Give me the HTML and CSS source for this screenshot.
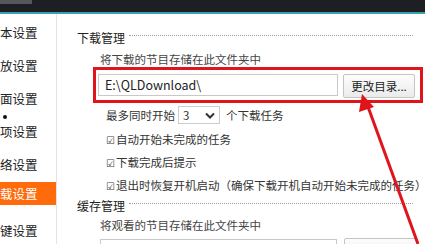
FILE: index.html
```html
<!DOCTYPE html>
<html lang="zh-CN">
<head>
    <meta charset="UTF-8">
    <title>下载设置</title>
    <link rel="stylesheet" href="styles.css">
</head>
<body>
    <div class="titlebar"><div class="tab"></div></div>
    <div class="window">
        <ul class="sidebar">
            <li>本设置</li>
            <li>放设置</li>
            <li>面设置</li>
            <li class="dot"></li>
            <li>项设置</li>
            <li>络设置</li>
            <li class="active">载设置</li>
            <li class="last">键设置</li>
        </ul>
        <div class="content">
            <div class="group-title"><span>下载管理</span><i></i></div>
            <div class="hint">将下载的节目存储在此文件夹中</div>
            <div class="marked">
                <div class="path">E:\QLDownload\</div>
                <button class="btn">更改目录...</button>
            </div>
            <div class="row tasks">
                <span>最多同时开始</span>
                <div class="select">3<svg width="10" height="7" viewBox="0 0 10 7"><path d="M1 1.5 L5 5.5 L9 1.5" fill="none" stroke="#333" stroke-width="2"/></svg></div>
                <span>个下载任务</span>
            </div>
            <div class="check first">自动开始未完成的任务</div>
            <div class="check mid">下载完成后提示</div>
            <div class="check">退出时恢复开机启动（确保下载开机自动开始未完成的任务）</div>
            <div class="group-title cache"><span>缓存管理</span><i></i></div>
            <div class="hint second">将观看的节目存储在此文件夹中</div>
            <div class="row bottom">
                <div class="path low"></div>
                <div class="btn low"></div>
            </div>
        </div>
    </div>
    <svg class="arrow" width="425" height="244" viewBox="0 0 425 244">
        <line x1="367" y1="104" x2="418" y2="244" stroke="#e0141b" stroke-width="3"/>
        <polygon points="362,94 359,112 374,107" fill="#e0141b"/>
    </svg>
</body>
</html>
```

FILE: styles.css
```css
body {
    margin: 0;
    width: 425px;
    height: 244px;
    overflow: hidden;
    background: #fff;
    font-family: "Noto Sans CJK SC", "Microsoft YaHei", sans-serif;
    font-size: 11.5px;
    color: #333;
    position: relative;
}

.titlebar {
    height: 12px;
    background: #1e1f22;
    border-bottom: 2px solid #3a9fb3;
}

.tab {
    width: 32px;
    height: 4px;
    background: #55575a;
}

.window {
    display: flex;
    height: 230px;
    overflow: hidden;
}

.sidebar {
    list-style: none;
    margin: 0;
    padding: 1.5px 0 0;
    width: 56px;
    flex: 0 0 56px;
    border-right: 1px solid #e4e4e4;
    font-size: 12.5px;
    color: #222;
}

.sidebar li {
    height: 33px;
    line-height: 33px;
}

/* small bullet between two items */
.sidebar li.dot {
    width: 4px;
    height: 4px;
    margin: 0 0 -4px 3px;
    border-radius: 50%;
    background: #111;
}

.sidebar li.active {
    background: #ff6a0a;
    color: #fff;
    height: 23px;
    line-height: 23px;
    margin-top: 1.5px;
}

.sidebar li.last {
    margin-top: 9px;
}

.content {
    flex: 1;
    padding-left: 20px;
}

.group-title {
    display: flex;
    align-items: center;
    margin-top: 15px;
    height: 16px;
    font-size: 12px;
    color: #222;
}

.group-title i {
    flex: 0 0 284px;
    margin: 0 0 3px 4px;
    border-top: 1px dotted #999;
}

.group-title.cache {
    margin-top: 0;
}

.hint {
    margin: 7px 0 0 23px;
    line-height: 15px;
    color: #444;
}

.hint.second {
    margin-top: 5px;
}

.marked {
    display: flex;
    align-items: center;
    margin-left: 16px;
    width: 330px;
    height: 36px;
    box-sizing: border-box;
    border: 3px solid #e0141b;
    padding-left: 2px;
}

.path {
    width: 240px;
    height: 22px;
    border: 1px solid #c9c9c9;
    line-height: 20px;
    padding-left: 6px;
    box-sizing: border-box;
    font-size: 12.5px;
    color: #222;
}

.btn {
    margin: 2px 0 0 5px;
    width: 72px;
    height: 24px;
    border: 1px solid #c4c4c4;
    border-radius: 2px;
    background: linear-gradient(#fdfdfd, #ebebeb);
    font-family: inherit;
    font-size: 11.5px;
    color: #222;
    padding: 0;
}

.row {
    display: flex;
    align-items: center;
}

.tasks {
    margin: 2px 0 0 29px;
    height: 20px;
    gap: 3px;
}

.tasks span:last-child {
    margin-left: 3px;
}

.select {
    display: flex;
    align-items: center;
    justify-content: space-between;
    width: 42px;
    height: 18px;
    border: 1px solid #ccc;
    padding: 0 4px;
    box-sizing: border-box;
}

.check {
    margin-left: 29px;
    height: 24px;
    line-height: 24px;
    white-space: nowrap;
}

.check.first {
    margin-top: 2px;
}

.check.mid {
    height: 22px;
    line-height: 22px;
}

.check::before {
    content: "☑";
    margin-right: 1px;
    font-family: "DejaVu Sans", sans-serif;
    font-size: 10px;
    color: #444;
}

.bottom {
    margin: 5px 0 0 23px;
    gap: 7px;
}

.path.low {
    width: 237px;
    height: 16px;
}

.btn.low {
    width: 72px;
    height: 16px;
    margin: 0;
}

.arrow {
    position: absolute;
    left: 0;
    top: 0;
}
```
